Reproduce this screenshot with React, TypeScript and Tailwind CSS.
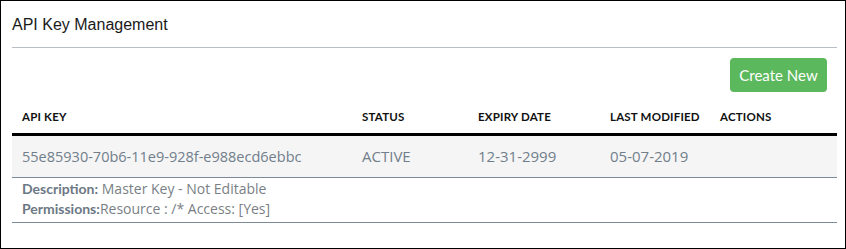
import React from "react";

export default function App() {
  const cols = "grid grid-cols-[340px_116px_132px_110px_1fr]";
  return (
    <div className="w-[846px] h-[249px] border border-black bg-white pl-[11px] pr-[8px] box-border">
      <div className="h-[47px] border-b border-[#b8bec6] pt-[14px]">
        <div className="text-[16px] leading-[20px] text-[#1a1a1a] font-['Liberation_Sans',Arial,sans-serif]">
          API Key Management
        </div>
      </div>
      <div className="flex justify-end pr-[10px] mt-[10px] mb-[8px]">
        <button className="w-[97px] h-[34px] rounded-[4px] bg-[#5cb85c] text-white text-[15px] font-['Lato',sans-serif]">
          Create New
        </button>
      </div>
      <div className={`${cols} h-[36px] border-b-[3px] border-black items-center text-[11.5px] font-bold text-[#111] font-['Lato',sans-serif] tracking-[0.2px]`}>
        <div className="pl-[10px]">API KEY</div>
        <div className="pl-[10px]">STATUS</div>
        <div className="pl-[10px]">EXPIRY DATE</div>
        <div className="pl-[10px]">LAST MODIFIED</div>
        <div className="pl-[10px]">ACTIONS</div>
      </div>
      <div className={`${cols} h-[42px] bg-[#f5f5f5] border-b border-[#7d8b99] items-center text-[15px] text-[#717e8b] font-['Open_Sans',sans-serif]`}>
        <div className="pl-[10px] text-[14.5px]">55e85930-70b6-11e9-928f-e988ecd6ebbc</div>
        <div className="pl-[10px]">ACTIVE</div>
        <div className="pl-[10px]">12-31-2999</div>
        <div className="pl-[10px]">05-07-2019</div>
        <div className="pl-[10px]"></div>
      </div>
      <div className="h-[45px] border-b border-[#7d8b99] pt-px pl-[10px] text-[14px] leading-[20px] text-[#7a7f85] font-['Open_Sans',sans-serif]">
        <div>
          <span className="font-bold text-[#6c7885] font-['Lato',sans-serif]">Description:</span> Master Key - Not Editable
        </div>
        <div>
          <span className="font-bold text-[#6c7885] font-['Lato',sans-serif]">Permissions:</span>Resource : /* Access: [Yes]
        </div>
      </div>
    </div>
  );
}
